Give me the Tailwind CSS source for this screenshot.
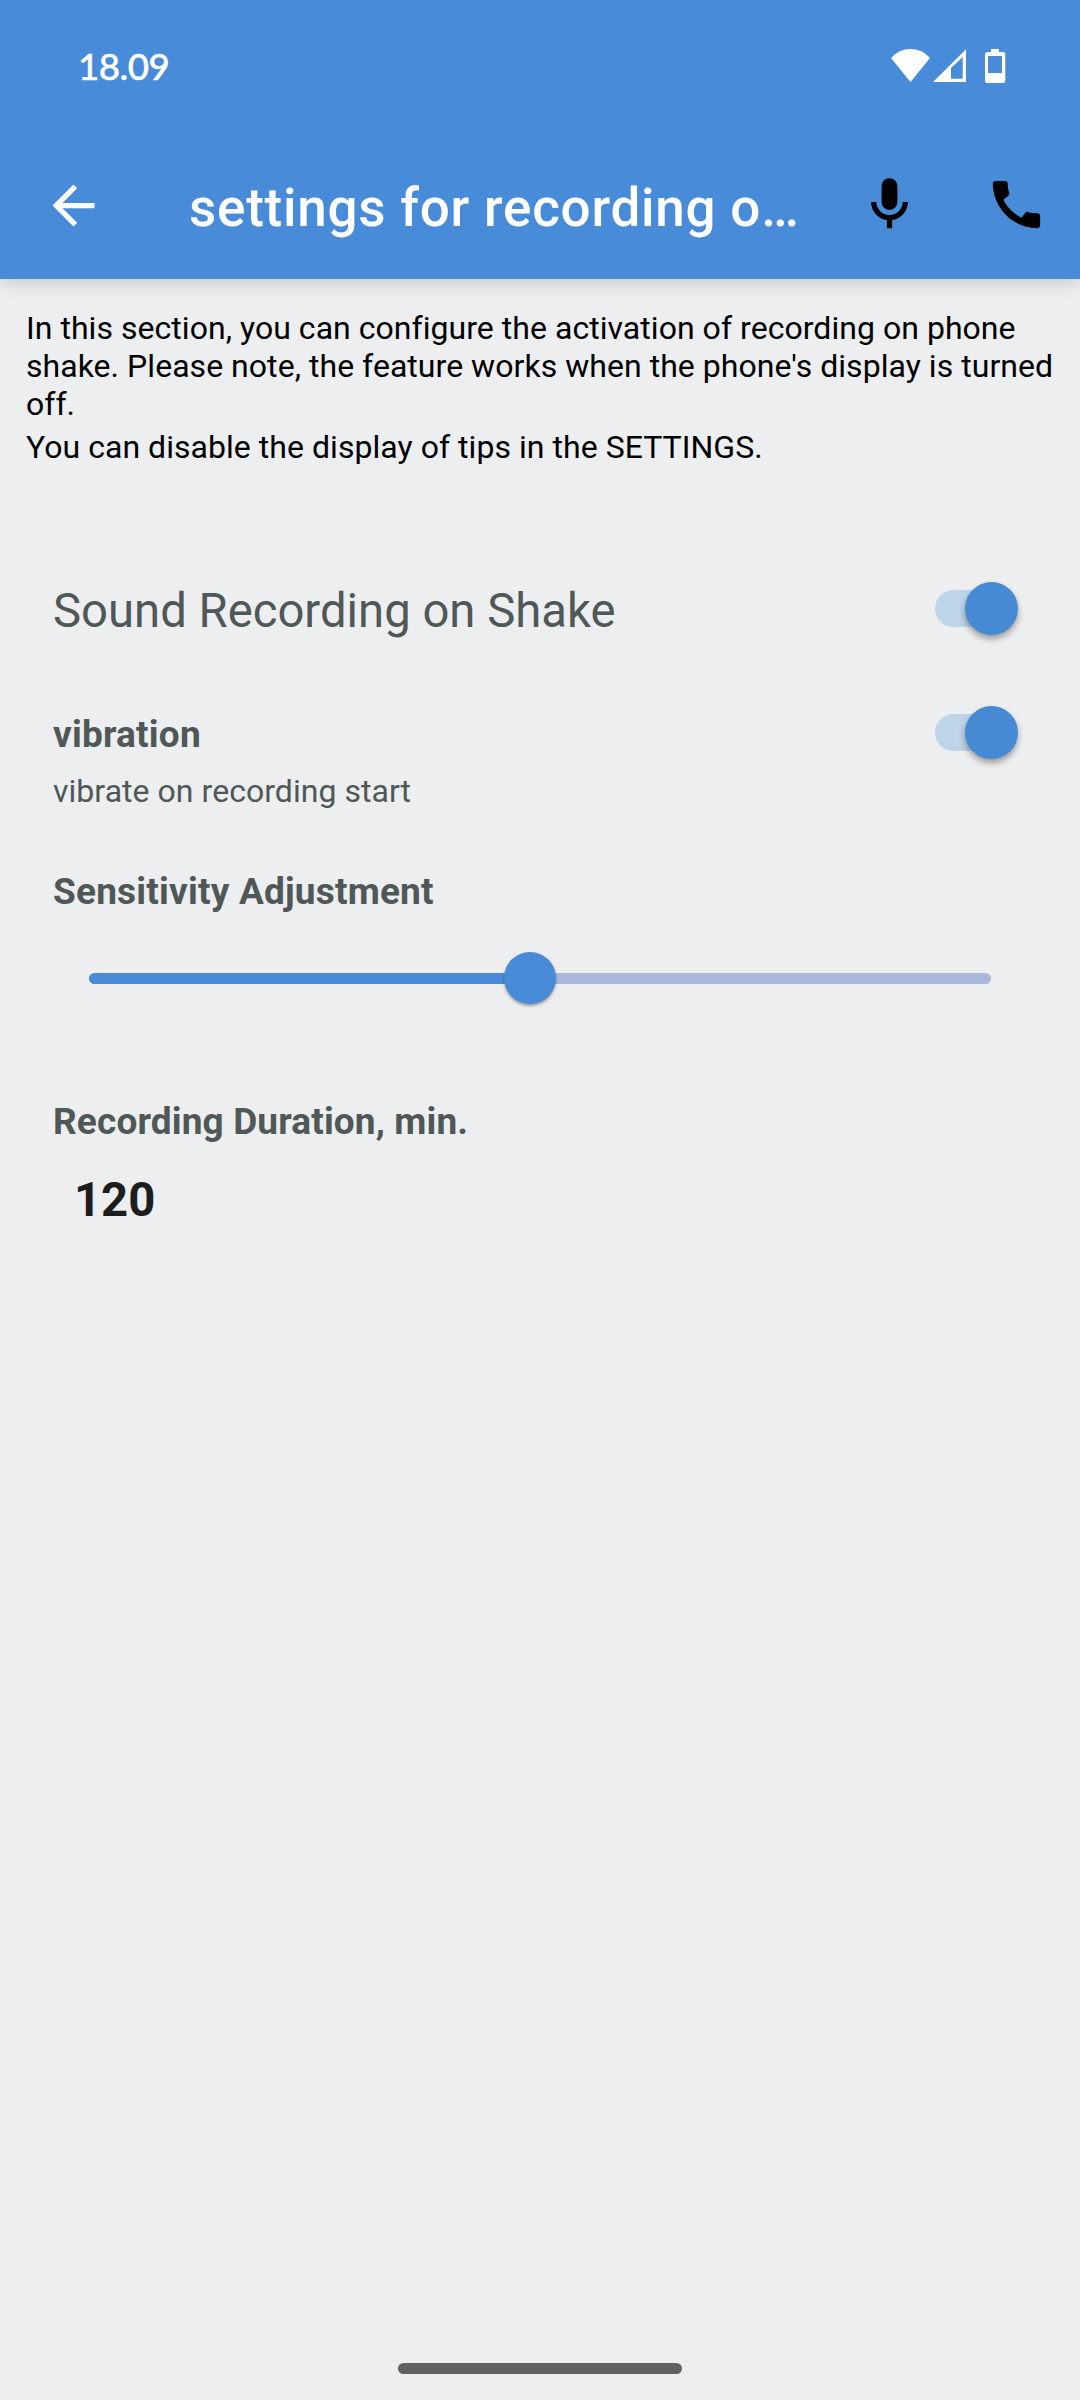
<!DOCTYPE html>
<html lang="en">
<head>
<meta charset="utf-8">
<title>Recording settings</title>
<script src="https://cdn.jsdelivr.net/npm/@tailwindcss/browser@4"></script>
</head>
<body class="bg-[#eceeef]">
<div class="flex h-[2400px] w-[1080px] flex-col overflow-hidden bg-[#eceeef] font-['Roboto',sans-serif]">
  <header class="h-[279px] shrink-0 bg-[#488bd8] shadow-[0_4px_16px_rgba(0,0,0,0.16)]">
    <!-- status bar -->
    <div class="flex h-[132px] items-center justify-between pl-[78px] pr-[74px]">
      <div class="font-['Lato',sans-serif] text-[36.75px] leading-[44px] font-medium tracking-[-0.53px] text-white [-webkit-text-stroke:0.4px_white]">18.09</div>
      <svg class="h-[34px] w-[115px]" viewBox="0 0 115 34" fill="#fff">
        <path d="M0 9Q8 0 19.5 0T39 9L19.5 33Z"/>
        <path fill-rule="evenodd" d="M42 33L75 .3V33ZM60 19V29.800H71.700V8Z"/>
        <path fill-rule="evenodd" d="M100 0h8v3h3.800q2.500 0 2.500 2.500V31.500q0 2.500-2.500 2.500h-15.300q-2.500 0-2.500-2.500V5.500q0-2.500 2.500-2.500H100ZM97 7V24H111V7Z"/>
      </svg>
    </div>
    <!-- toolbar -->
    <div class="flex h-[147px] items-center pl-[42px] pr-[32px]">
      <svg class="h-[63px] w-[63px] shrink-0" viewBox="0 0 24 24" fill="#fff"><path d="M20 11H7.830l5.590-5.590L12 4l-8 8 8 8 1.410-1.410L7.830 13H20v-2z"/></svg>
      <h1 class="mt-[5px] ml-[84px] flex-1 text-[53px] leading-[62px] font-medium tracking-[0.76px] whitespace-nowrap text-white">settings for recording o…</h1>
      <div class="mb-[2px] flex gap-[64px]">
        <svg class="h-[63px] w-[63px]" viewBox="0 0 24 24" fill="#000"><path d="M12 14c1.660 0 3-1.340 3-3V5c0-1.660-1.340-3-3-3S9 3.340 9 5v6c0 1.660 1.340 3 3 3zM17 11c0 2.760-2.240 5-5 5s-5-2.240-5-5H5c0 3.530 2.610 6.430 6 6.920V21h2v-3.080c3.390-.49 6-3.390 6-6.920h-2z"/></svg>
        <svg class="h-[63px] w-[63px]" viewBox="0 0 24 24" fill="#000"><path d="M20.010 15.380c-1.230 0-2.420-.2-3.530-.56-.35-.12-.74-.03-1.010.24l-1.570 1.970c-2.830-1.350-5.480-3.900-6.890-6.830l1.950-1.660c.27-.28.35-.67.24-1.020-.37-1.110-.56-2.300-.56-3.530 0-.54-.45-.99-.99-.99H4.190C3.650 3 3 3.240 3 3.990 3 13.280 10.730 21 20.010 21c.71 0 .99-.63.99-1.180v-3.450c0-.54-.45-.99-.99-.99z"/></svg>
      </div>
    </div>
  </header>

  <section class="h-[303px] shrink-0 pt-[30px] pl-[26px] text-[32px] leading-[38px] tracking-[0.04px] whitespace-nowrap text-black">
    <p>In this section, you can configure the activation of recording on phone<br>shake. Please note, the feature works when the phone's display is turned<br>off.</p>
    <p class="mt-[5px]">You can disable the display of tips in the SETTINGS.</p>
  </section>

  <main class="flex flex-col px-[53px] text-[#4f5757]">
    <div class="flex h-[124px] items-start justify-between">
      <div class="mt-px text-[47.25px] leading-[56px]">Sound Recording on Shake</div>
      <div class="mr-[9px] flex h-[53px] w-[83px] items-center rounded-full">
        <div class="h-[37px] w-[56px] rounded-l-full bg-[#bdd4e9]"></div>
        <div class="-ml-[26px] h-[53px] w-[53px] rounded-full bg-[#468ad4] shadow-[0_4px_6px_rgba(0,0,0,0.35)]"></div>
      </div>
    </div>
    <div class="flex h-[164px] items-start justify-between">
      <div class="pt-[7px]">
        <div class="text-[37px] leading-[44px] font-bold tracking-[0.2px]">vibration</div>
        <div class="mt-[15px] text-[32px] leading-[38px] tracking-[0.04px]">vibrate on recording start</div>
      </div>
      <div class="mr-[9px] flex h-[53px] w-[83px] items-center rounded-full">
        <div class="h-[37px] w-[56px] rounded-l-full bg-[#bdd4e9]"></div>
        <div class="-ml-[26px] h-[53px] w-[53px] rounded-full bg-[#468ad4] shadow-[0_4px_6px_rgba(0,0,0,0.35)]"></div>
      </div>
    </div>
    <div class="text-[37px] leading-[44px] font-bold tracking-[0.2px]">Sensitivity Adjustment</div>
    <div class="mt-[38px] ml-[36px] flex h-[52px] w-[902px] items-center">
      <div class="h-[11px] w-[421px] shrink-0 rounded-l-full bg-[#488bd8]"></div>
      <div class="z-10 -ml-[6px] h-[52px] w-[52px] shrink-0 rounded-full bg-[#488bd8] shadow-[0_2px_3px_rgba(0,0,0,0.35)]"></div>
      <div class="-ml-[6px] h-[11px] flex-1 rounded-r-full bg-[#aab8d9]"></div>
    </div>
    <div class="mt-[96px] text-[37px] leading-[44px] font-bold tracking-[0.14px]">Recording Duration, min.</div>
    <div class="mt-[28px] ml-[21px] text-[47.25px] leading-[56px] font-bold text-[#1d1d1d]">120</div>
  </main>

  <div class="mt-auto mb-[26px] h-[11px] w-[284px] shrink-0 self-center rounded-full bg-[#5f6163]"></div>
</div>
</body>
</html>
